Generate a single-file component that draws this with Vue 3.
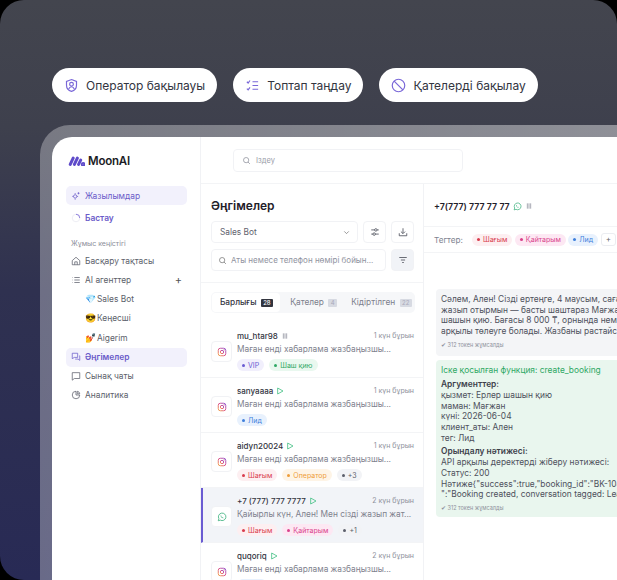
<template>
  <div class="hero">
    <svg class="defs" width="0" height="0">
      <defs>
        <linearGradient id="ig-grad" x1="0" y1="1" x2="1" y2="0">
          <stop offset="0" stop-color="#f2a33c" />
          <stop offset="0.5" stop-color="#d9417f" />
          <stop offset="1" stop-color="#8a4fd0" />
        </linearGradient>
      </defs>
    </svg>
    <div class="chips">
      <div class="chip">
        <svg class="chip-icon" viewBox="0 0 24 24"><path d="M12 2.500l8 3v6c0 5-3.400 8.500-8 10-4.600-1.500-8-5-8-10v-6z" /><circle cx="12" cy="10" r="3" /><path d="M7.500 17.500c1-2.300 2.600-3.500 4.500-3.500s3.500 1.200 4.500 3.500" /></svg>
        <span>Оператор бақылауы</span>
      </div>
      <div class="chip">
        <svg class="chip-icon" viewBox="0 0 24 24"><path d="M3 6l2 2 3-4M3 17l2 2 3-4M12 6h9M12 12h9M12 18h9" /></svg>
        <span>Топтап таңдау</span>
      </div>
      <div class="chip">
        <svg class="chip-icon" viewBox="0 0 24 24"><circle cx="12" cy="12" r="10" /><path d="M5 5l14 14" /></svg>
        <span>Қателерді бақылау</span>
      </div>
    </div>

    <div class="frame">
      <div class="window">
        <aside class="sidebar">
          <div class="logo">
            <svg viewBox="0 0 20 12" class="logo-mark"><path d="M2.500 10L6 2.500M7.500 10L11 2.500M12.500 10L15 5" /><circle cx="18" cy="10" r="1" /></svg>
            <span>MoonAI</span>
          </div>
          <div class="nav-item active">
            <svg class="nav-icon" viewBox="0 0 24 24"><circle cx="10" cy="13" r="4" /><path d="M10 5v3M10 18v3M3 13h3M14 13h3M18 3v5M15.500 5.500h5" /></svg>
            <span>Жазылымдар</span>
          </div>
          <div class="nav-item start">
            <svg class="nav-icon" viewBox="0 0 24 24"><circle cx="12" cy="12" r="9" stroke="#e8e8f0" /><path d="M12 3a9 9 0 0 1 9 9" stroke="#6f5ad6" /></svg>
            <span>Бастау</span>
          </div>
          <div class="nav-label">Жұмыс кеңістігі</div>
          <div class="nav-item">
            <svg class="nav-icon" viewBox="0 0 24 24"><path d="M3 11l9-8 9 8v10H3zM9 21v-7h6v7" /></svg>
            <span>Басқару тақтасы</span>
          </div>
          <div class="nav-item">
            <svg class="nav-icon" viewBox="0 0 24 24"><path d="M8 6h13M8 12h13M8 18h13M3 6h1M3 12h1M3 18h1" /></svg>
            <span>AI агенттер</span>
            <b class="plus">+</b>
          </div>
          <div class="nav-sub"><i>💎</i><span>Sales Bot</span></div>
          <div class="nav-sub"><i>😎</i><span>Кеңесші</span></div>
          <div class="nav-sub"><i>💅</i><span>Aigerim</span></div>
          <div class="nav-item active bold">
            <svg class="nav-icon" viewBox="0 0 24 24"><path d="M3 3h13v10H8l-5 3zM20 9h1v11l-4-3H10" /></svg>
            <span>Әңгімелер</span>
          </div>
          <div class="nav-item">
            <svg class="nav-icon" viewBox="0 0 24 24"><path d="M3 4h18v14H8l-5 4z" /></svg>
            <span>Сынақ чаты</span>
          </div>
          <div class="nav-item">
            <svg class="nav-icon" viewBox="0 0 24 24"><path d="M12 3a9 9 0 1 0 9 9h-9zM15 3a7 7 0 0 1 6 6h-6z" /></svg>
            <span>Аналитика</span>
          </div>
        </aside>

        <main class="main">
          <div class="topbar">
            <div class="search">
              <svg class="search-icon" viewBox="0 0 24 24"><circle cx="11" cy="11" r="7" /><path d="M16 16l5 5" /></svg>
              <span>Іздеу</span>
            </div>
          </div>
          <div class="panes">
            <section class="list">
              <div class="list-head">
                <h2>Әңгімелер</h2>
                <div class="tool-row">
                  <div class="select"><span>Sales Bot</span><svg viewBox="0 0 24 24"><path d="M6 9l6 6 6-6" /></svg></div>
                  <div class="tool-btn"><svg viewBox="0 0 24 24"><path d="M3 7h8M17 7h4M3 17h4M13 17h8" /><circle cx="14" cy="7" r="3" /><circle cx="10" cy="17" r="3" /></svg></div>
                  <div class="tool-btn"><svg viewBox="0 0 24 24"><path d="M12 3v12M7 11l5 5 5-5M3 15v6h18v-6" /></svg></div>
                </div>
                <div class="tool-row">
                  <div class="select wide">
                    <svg class="find" viewBox="0 0 24 24"><circle cx="11" cy="11" r="7" /><path d="M16 16l5 5" /></svg>
                    <span>Аты немесе телефон нөмірі бойын...</span>
                  </div>
                  <div class="tool-btn filter"><svg viewBox="0 0 24 24"><path d="M3 6h18M7 12h10M10 18h4" /></svg></div>
                </div>
              </div>
              <div class="tabs-wrap">
                <div class="tabs">
                  <div class="tab on">Барлығы <em>28</em></div>
                  <div class="tab">Қателер <em>4</em></div>
                  <div class="tab">Кідіртілген <em>22</em></div>
                </div>
              </div>
              <div v-for="c in conversations" :key="c.name" class="row" :class="{ selected: c.selected }">
                <div class="channel">
                  <svg v-if="c.whatsapp" viewBox="0 0 24 24" class="wa"><path d="M3 21l1.500-5A9 9 0 1 1 8 19.500z" /><path d="M9 8c-1 1 0 3.500 1.500 5s4 2.500 5 1.500l-1.500-2-1.500.8c-1-.5-1.800-1.300-2.300-2.300l.8-1.500z" /></svg>
                  <svg v-else viewBox="0 0 24 24" class="ig"><rect x="3" y="3" width="18" height="18" rx="5" /><circle cx="12" cy="12" r="4" /><circle cx="17" cy="7" r=".6" /></svg>
                </div>
                <div class="row-body">
                  <div class="row-top">
                    <span class="name">{{ c.name }}</span>
                    <svg v-if="c.paused" class="state" viewBox="0 0 12 12"><path d="M3.500 2v8M6 2v8M8.500 2v8" stroke="#9a9da8" /></svg>
                    <svg v-else class="state" viewBox="0 0 12 12"><path d="M2.500 1.500l8 4.500-8 4.500z" stroke="#4cc38a" /></svg>
                    <span class="time">{{ c.time }}</span>
                  </div>
                  <div class="preview">{{ c.text }}</div>
                  <div class="tags">
                    <span v-for="t in c.tags" :key="t.label" class="tag" :class="t.kind">{{ t.label }}</span>
                  </div>
                </div>
              </div>
            </section>

            <section class="detail">
              <div class="detail-head">
                <strong>+7(777) 777 77 77</strong>
                <svg class="wa small" viewBox="0 0 24 24"><path d="M3 21l1.500-5A9 9 0 1 1 8 19.500z" /><path d="M9 8c-1 1 0 3.500 1.500 5s4 2.500 5 1.500l-1.500-2-1.500.8c-1-.5-1.800-1.300-2.300-2.300l.8-1.500z" /></svg>
                <svg class="state" viewBox="0 0 12 12"><path d="M3.500 2v8M6 2v8M8.500 2v8" stroke="#9a9da8" /></svg>
              </div>
              <div class="tag-bar">
                <span class="tag-title">Тегтер:</span>
                <span class="tag red">Шағым</span>
                <span class="tag pink">Қайтарым</span>
                <span class="tag blue">Лид</span>
                <span class="tag-add">+</span>
              </div>
              <div class="messages">
                <div class="bubble">
                  <p>Сәлем, Ален! Сізді ертеңге, 4 маусым, сағат</p>
                  <p>жазып отырмын — басты шаштараз Мағжанға</p>
                  <p>шашын қию. Бағасы 8 000 ₸, орнында немесе</p>
                  <p>арқылы төлеуге болады. Жазбаны растайсыз</p>
                  <small>✔ 312 токен жұмсалды</small>
                </div>
                <div class="bubble green">
                  <p class="fn">Іске қосылған функция: create_booking</p>
                  <p class="sub">Аргументтер:</p>
                  <p>қызмет: Ерлер шашын қию</p>
                  <p>маман: Мағжан</p>
                  <p>күні: 2026-06-04</p>
                  <p>клиент_аты: Ален</p>
                  <p>тег: Лид</p>
                  <p class="sub gap">Орындалу нәтижесі:</p>
                  <p>API арқылы деректерді жіберу нәтижесі:</p>
                  <p>Статус: 200</p>
                  <p>Нәтиже{"success":true,"booking_id":"BK-1042"</p>
                  <p>":"Booking created, conversation tagged: Lead"</p>
                  <small>✔ 312 токен жұмсалды</small>
                </div>
              </div>
            </section>
          </div>
        </main>
      </div>
    </div>
  </div>
</template>

<script setup>
const msg = 'Маған енді хабарлама жазбаңызшы...'

const conversations = [
  { name: 'mu_htar98', time: '1 күн бұрын', text: msg, paused: true, tags: [{ label: 'VIP', kind: 'violet' }, { label: 'Шаш қию', kind: 'green' }] },
  { name: 'sanyaaaa', time: '1 күн бұрын', text: msg, tags: [{ label: 'Лид', kind: 'blue' }] },
  { name: 'aidyn20024', time: '1 күн бұрын', text: msg, tags: [{ label: 'Шағым', kind: 'red' }, { label: 'Оператор', kind: 'orange' }, { label: '+3', kind: 'grey' }] },
  { name: '+7 (777) 777 7777', time: '2 күн бұрын', text: 'Қайырлы күн, Ален! Мен сізді жазып жат...', selected: true, whatsapp: true, tags: [{ label: 'Шағым', kind: 'red' }, { label: 'Қайтарым', kind: 'pink' }, { label: '+1', kind: 'grey' }] },
  { name: 'quqoriq', time: '2 күн бұрын', text: msg, tags: [{ label: 'Лид', kind: 'blue' }] },
]
</script>

<style>
html, body {
  margin: 0;
  background: #000;
}
</style>

<style scoped>
.hero {
  position: relative;
  width: 617px;
  height: 580px;
  box-sizing: border-box;
  padding-top: 68px;
  overflow: hidden;
  border-radius: 24px 24px 0 24px;
  font-family: Inter, "Noto Sans", sans-serif;
  color: #3d3f4b;
  background: linear-gradient(180deg, #43454e 0%, #3e404d 22%, #2f3150 50%, #282a55 100%);
}
.defs {
  position: absolute;
}
.chips {
  display: flex;
  gap: 16px;
  padding-left: 52px;
}
.chip {
  display: flex;
  align-items: center;
  gap: 7px;
  height: 34px;
  padding: 0 12px;
  border-radius: 17px;
  background: #fff;
  font-size: 12px;
  color: #33353f;
  white-space: nowrap;
}
.chip-icon {
  width: 15px;
  height: 15px;
  fill: none;
  stroke: #7a68d8;
  stroke-width: 1.900;
}
.frame {
  margin: 23px 0 0 40px;
  height: 500px;
  padding: 12px 0 0 12px;
  border-radius: 30px 0 0 0;
  background: linear-gradient(90deg, rgba(255, 255, 255, 0.3) 0%, rgba(255, 255, 255, 0.42) 100%);
}
.window {
  display: flex;
  height: 100%;
  overflow: hidden;
  background: #fff;
  border-radius: 20px 0 0 0;
}
.sidebar {
  flex: none;
  width: 149px;
  box-sizing: border-box;
  padding: 14px 13px 0 14px;
  border-right: 1px solid #f1f2f5;
}
.logo {
  display: flex;
  align-items: center;
  gap: 3px;
  height: 20px;
  margin: 0 0 15px 2px;
  font-size: 11.500px;
  font-weight: 600;
  letter-spacing: -0.2px;
  color: #1c1d26;
}
.logo-mark {
  width: 17px;
  height: 10px;
  fill: #5f4bc9;
  stroke: #5f4bc9;
  stroke-width: 3.600;
  stroke-linecap: round;
}
.nav-item {
  display: flex;
  align-items: center;
  gap: 4px;
  height: 19px;
  padding-left: 5px;
  font-size: 8.400px;
  color: #5c5f6b;
  border-radius: 5px;
}
.nav-item.active {
  background: #f2f1fc;
  color: #6a5bc9;
}
.nav-item.bold, .nav-item.start {
  font-weight: 600;
  color: #6a5bc9;
}
.nav-item.start {
  margin-top: 3px;
}
.nav-icon {
  flex: none;
  width: 10px;
  height: 10px;
  fill: none;
  stroke: currentColor;
  stroke-width: 1.800;
}
.nav-label {
  margin: 12px 0 3px 5px;
  font-size: 7px;
  line-height: 9px;
  color: #8b8e99;
}
.plus {
  margin-left: auto;
  margin-right: 5px;
  font-weight: 400;
  font-size: 11px;
  color: #555;
}
.nav-sub {
  display: flex;
  align-items: center;
  gap: 2px;
  height: 19.500px;
  padding-left: 19px;
  font-size: 8.400px;
  color: #5c5f6b;
}
.nav-sub i {
  font-style: normal;
  font-size: 9px;
  width: 10px;
  font-family: "Noto Color Emoji", sans-serif;
}
.main {
  flex: 1;
  min-width: 0;
}
.topbar {
  height: 47px;
  box-sizing: border-box;
  padding: 12px 0 0 32px;
  border-bottom: 1px solid #f3f4f6;
}
.search {
  display: flex;
  align-items: center;
  gap: 5px;
  width: 230px;
  height: 23px;
  box-sizing: border-box;
  padding-left: 8px;
  border: 1px solid #f1f2f5;
  border-radius: 4px;
  font-size: 7.500px;
  color: #9a9da8;
}
.search-icon, .find {
  width: 9px;
  height: 9px;
  fill: none;
  stroke: #8d909b;
  stroke-width: 2;
}
.panes {
  display: flex;
}
.list {
  flex: none;
  width: 222px;
  border-right: 1px solid #f1f2f5;
}
.list-head {
  padding: 14px 9px 11px 10px;
  border-bottom: 1px solid #f3f4f6;
}
h2 {
  margin: 0 0 7px;
  font-size: 12px;
  line-height: 16px;
  font-weight: 600;
  color: #1f2029;
}
.tool-row {
  display: flex;
  gap: 5px;
  margin-bottom: 6px;
}
.tool-row:last-child {
  margin-bottom: 0;
}
.select {
  display: flex;
  flex: 1;
  align-items: center;
  justify-content: space-between;
  height: 22px;
  box-sizing: border-box;
  padding: 0 6px 0 8px;
  border: 1px solid #f1f2f5;
  border-radius: 4px;
  font-size: 8.300px;
  color: #5f626e;
}
.select svg {
  width: 9px;
  height: 9px;
  fill: none;
  stroke: #777;
  stroke-width: 2;
}
.select.wide {
  justify-content: flex-start;
  gap: 4px;
  padding-left: 6px;
  white-space: nowrap;
  color: #9093a0;
}
.select.wide span {
  font-size: 8px;
}
.tool-btn {
  display: flex;
  flex: none;
  align-items: center;
  justify-content: center;
  width: 23px;
  height: 22px;
  box-sizing: border-box;
  border: 1px solid #f1f2f5;
  border-radius: 4px;
}
.tool-btn svg {
  width: 10px;
  height: 10px;
  fill: none;
  stroke: #4d505c;
  stroke-width: 2;
}
.tool-btn.filter {
  background: #f1f3f7;
}
.tabs-wrap {
  padding: 9px 8px 10px 10px;
}
.tabs {
  display: flex;
  align-items: center;
  height: 21px;
  padding: 0 1px;
  border-radius: 5px;
  background: #f6f7f9;
  font-size: 8.300px;
  color: #7b7e8b;
}
.tab {
  padding: 0 7px;
  line-height: 19px;
  white-space: nowrap;
}
.tab.on {
  padding: 0 7px 0 8px;
  margin-right: 3px;
  border-radius: 4px;
  background: #fff;
  color: #33353f;
  font-weight: 500;
}
.tab em {
  display: inline-block;
  padding: 0 2.500px;
  margin-left: 2px;
  font-size: 6px;
  line-height: 8px;
  font-style: normal;
  border-radius: 1px;
  background: #d7dae2;
  color: #aab;
}
.tab.on em {
  background: #33353f;
  color: #fff;
}
.row {
  display: flex;
  gap: 5px;
  height: 55px;
  box-sizing: border-box;
  padding: 6px 9px 0 10px;
  border-bottom: 1px solid #f3f4f6;
}
.row.selected {
  padding-left: 8px;
  border-left: 2px solid #6a5bd2;
  background: #f2f4f8;
}
.channel {
  flex: none;
  display: flex;
  align-items: center;
  justify-content: center;
  width: 21px;
  height: 21px;
  box-sizing: border-box;
  margin-top: 12px;
  border: 1px solid #f1f2f5;
  border-radius: 4px;
  background: #fff;
}
.ig {
  width: 10px;
  height: 10px;
  fill: none;
  stroke: url(#ig-grad);
  stroke-width: 2.200;
}
.wa {
  width: 10px;
  height: 10px;
  fill: none;
  stroke: #3fb27f;
  stroke-width: 2;
}
.wa path + path {
  fill: #3fb27f;
  stroke: none;
}
.wa.small {
  width: 9px;
  height: 9px;
}
.row-body {
  flex: 1;
  min-width: 0;
}
.row-top {
  display: flex;
  align-items: center;
  gap: 3px;
  height: 13px;
}
.name {
  font-size: 8px;
  font-weight: 500;
  color: #33353f;
}
.state {
  flex: none;
  width: 8px;
  height: 8px;
  fill: none;
  stroke-width: 1.300;
}
.time {
  margin-left: auto;
  font-size: 7px;
  color: #8e919c;
}
.preview {
  margin-top: 1px;
  font-size: 8.300px;
  line-height: 12px;
  white-space: nowrap;
  color: #7e818d;
}
.tags {
  display: flex;
  gap: 5px;
  margin-top: 4px;
}
.tag {
  display: inline-flex;
  align-items: center;
  gap: 3px;
  height: 12px;
  padding: 0 5px;
  border-radius: 6px;
  font-size: 7px;
  white-space: nowrap;
}
.tag::before {
  content: "";
  width: 3px;
  height: 3px;
  border-radius: 50%;
  background: currentColor;
}
.red { background: #fdeff1; color: #d93c4e; }
.pink { background: #fde8f3; color: #d9428c; }
.blue { background: #e8f1fd; color: #3f7fdc; }
.green { background: #e9f8ef; color: #2fa864; }
.violet { background: #f1effc; color: #6a5bd2; }
.orange { background: #fef4e6; color: #ee9d3a; }
.grey { background: #f2f3f6; color: #5c5f6b; }
.detail {
  flex: 1;
  min-width: 0;
  overflow: hidden;
}
.detail-head {
  display: flex;
  align-items: center;
  gap: 3px;
  height: 43px;
  box-sizing: border-box;
  padding: 2px 0 0 10px;
  border-bottom: 1px solid #f3f4f6;
}
.detail-head strong {
  font-size: 8.800px;
  font-weight: 600;
  color: #1f2029;
  white-space: nowrap;
}
.tag-bar {
  display: flex;
  align-items: center;
  gap: 2.500px;
  height: 26px;
  box-sizing: border-box;
  padding-left: 10px;
  border-bottom: 1px solid #f3f4f6;
  white-space: nowrap;
}
.tag-title {
  font-size: 8.200px;
  color: #80838f;
  margin-right: 6.500px;
}
.tag-add {
  padding: 0 4px;
  font-size: 8px;
  line-height: 11px;
  color: #666;
  border: 1px solid #ebedf1;
  border-radius: 3px;
}
.messages {
  padding: 36px 0 0 12px;
}
.bubble {
  width: 230px;
  box-sizing: border-box;
  padding: 5px;
  border-radius: 4px;
  background: #f4f5f7;
  font-size: 8.400px;
  line-height: 10.700px;
  color: #4e515c;
  white-space: nowrap;
}
.bubble p {
  margin: 0;
}
.bubble small {
  display: block;
  margin-top: 3px;
  font-size: 5.500px;
  color: #8e919c;
}
.bubble.green {
  margin-top: 4px;
  padding-bottom: 3px;
  background: #e9f6ee;
  color: #4e515c;
}
.fn {
  margin-bottom: 4px !important;
  color: #2fa864;
}
.sub {
  font-weight: 600;
  color: #3d3f4b;
}
.sub.gap {
  margin-top: 3px;
}
</style>
